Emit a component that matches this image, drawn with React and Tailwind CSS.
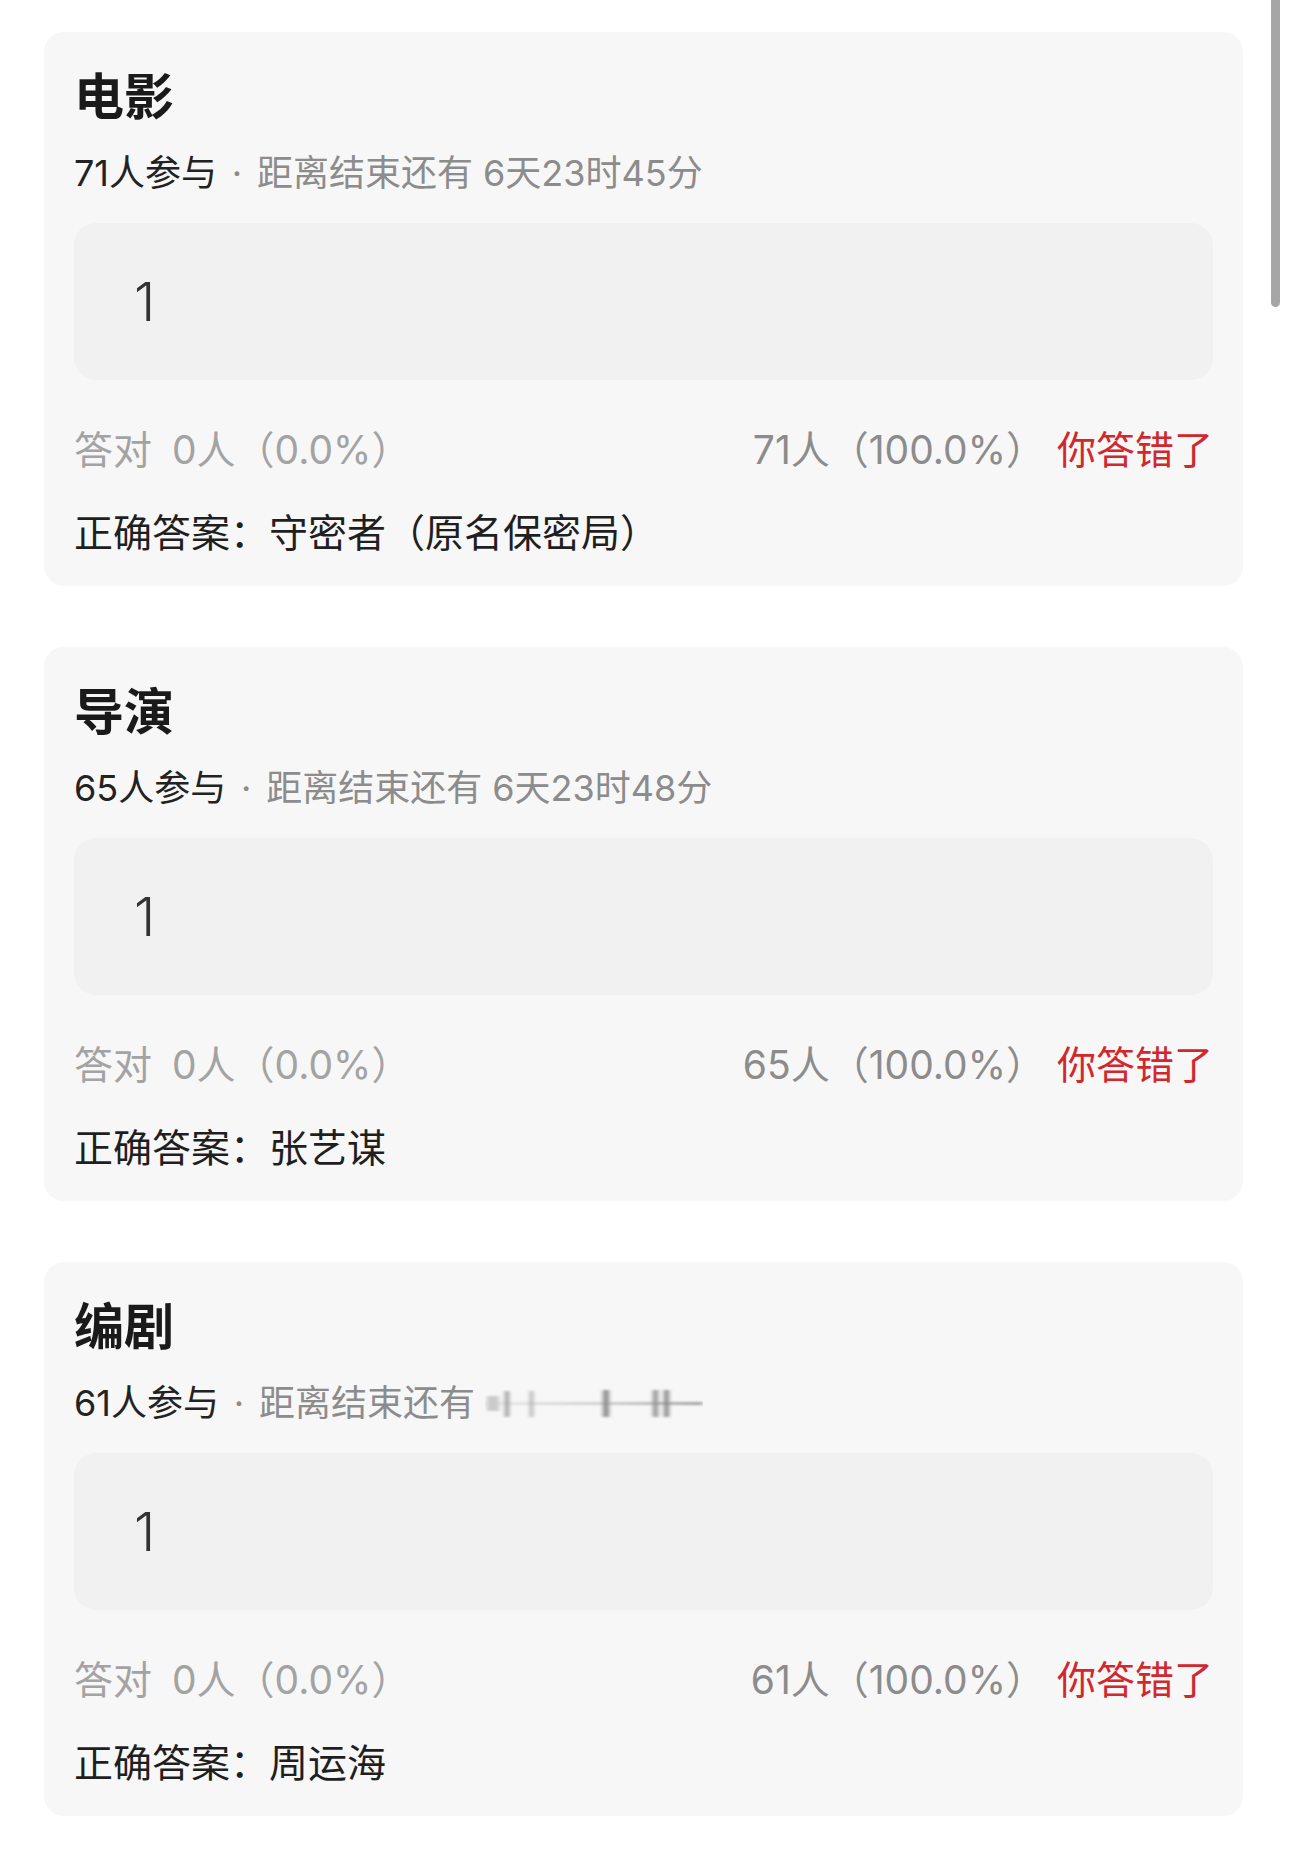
import React from "react";

const cards = [
  {
    title: "电影",
    count: "71人参与",
    time: "6天23时45分",
    total: "71人（100.0%）",
    answer: "守密者（原名保密局）",
  },
  {
    title: "导演",
    count: "65人参与",
    time: "6天23时48分",
    total: "65人（100.0%）",
    answer: "张艺谋",
  },
  {
    title: "编剧",
    count: "61人参与",
    time: null,
    total: "61人（100.0%）",
    answer: "周运海",
  },
];

// blurred countdown in the last card
function BlurredTime() {
  return (
    <svg width="218" height="36" viewBox="0 0 218 36" className="ml-[10px]">
      <defs>
        <filter id="mb" x="-20%" y="-30%" width="140%" height="160%">
          <feGaussianBlur stdDeviation="2 1" />
        </filter>
        <linearGradient id="ln" x1="0" x2="1">
          <stop offset="0" stopColor="#bbb" stopOpacity="0.2" />
          <stop offset="0.5" stopColor="#c4c4c4" stopOpacity="0.7" />
          <stop offset="1" stopColor="#999" stopOpacity="0.9" />
        </linearGradient>
      </defs>
      <g filter="url(#mb)">
        <rect x="0" y="17" width="218" height="3" fill="url(#ln)" />
        <rect x="2" y="11" width="12" height="15" fill="#cacaca" />
        <rect x="20" y="6" width="4" height="26" fill="#9a9a9a" />
        <rect x="45" y="6" width="3" height="26" fill="#a8a8a8" />
        <rect x="118" y="5" width="6" height="27" fill="#8c8c8c" />
        <rect x="168" y="5" width="5" height="27" fill="#939393" />
        <rect x="179" y="5" width="5" height="27" fill="#8a8a8a" />
      </g>
    </svg>
  );
}

function Card({ item }) {
  return (
    <div className="bg-[#f7f7f7] rounded-[20px] px-[30px] pt-[36px] pb-[31px]">
      <div className="h-[58px] flex items-center text-[50px] font-bold text-[#1a1a1a] leading-none">
        {item.title}
      </div>
      <div className="mt-[24px] h-[46px] flex items-center text-[36px] leading-none">
        <span className="text-[#222]">{item.count}</span>
        <span className="w-[40px] flex justify-center text-[#8c8c8c]">·</span>
        <span className="text-[#8c8c8c]">距离结束还有</span>
        {item.time ? (
          <span className="text-[#8c8c8c] ml-[10px]">{item.time}</span>
        ) : (
          <BlurredTime />
        )}
      </div>
      <div className="mt-[27px] h-[157px] bg-[#f1f1f1] rounded-[22px] flex items-center pl-[60px] text-[54px] font-light text-[#333] leading-none">
        1
      </div>
      <div className="mt-[46px] h-[46px] flex items-center text-[39px] leading-none">
        <span className="text-[#a3a3a3]">答对</span>
        <span className="text-[#a3a3a3] ml-[20px]">0人（0.0%）</span>
        <span className="ml-auto text-[#8c8c8c]">{item.total}</span>
        <span className="ml-[12px] text-[#d1282e]">你答错了</span>
      </div>
      <div className="mt-[37px] h-[46px] flex items-center text-[39px] text-[#1f1f1f] leading-none">
        正确答案：{item.answer}
      </div>
    </div>
  );
}

export default function App() {
  return (
    <div className="relative w-[1289px] h-[1850px] bg-white font-['Inter','Noto_Sans_CJK_SC',sans-serif]">
      <div className="flex flex-col gap-[61px] pt-[32px] pl-[44px] pr-[46px]">
        {cards.map((c) => (
          <Card key={c.title} item={c} />
        ))}
      </div>
      <div className="absolute top-0 left-[1271px] w-[9px] h-[307px] rounded-b-full bg-[#a6a6a6]" />
    </div>
  );
}
